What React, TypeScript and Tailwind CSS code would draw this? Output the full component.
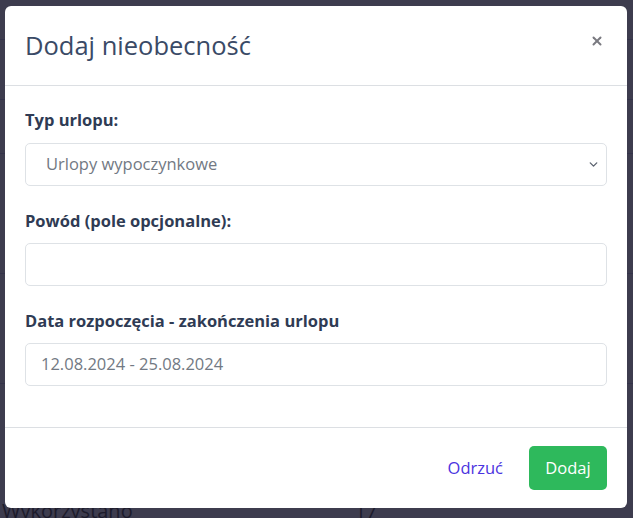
import React from 'react';
import { ChevronDown, X } from 'lucide-react';

const font = { fontFamily: '"Open Sans", "Noto Sans", sans-serif' };

const App: React.FC = () => {
  return (
    <div className="relative h-[518px] w-[633px] overflow-hidden bg-[#3d3c4e]" style={font}>
      {/* page behind the dialog, dimmed */}
      <div className="flex flex-col text-[#1c1b2b]">
        <div className="h-[40px] border-b border-[#34334a]" />
        <div className="h-[60px] border-b border-[#34334a]" />
        <div className="h-[54px] border-b border-[#34334a]" />
        <div className="h-[120px] border-b border-[#34334a]" />
        <div className="h-[110px] border-b border-[#34334a]" />
        <div className="flex h-[138px] items-end gap-[222px] pl-[2px] text-[20px] leading-[22px]">
          <span>Wykorzystano</span>
          <span>17</span>
        </div>
      </div>

      <div className="absolute inset-0 px-[5px] pt-[6px]">
        <div className="flex h-[502px] w-[622px] flex-col rounded-[6px] bg-white">
          <div className="flex h-[80px] items-center justify-between border-b border-[#dcdfe3] pl-5 pr-[23px]">
            <h1 className="text-[25.5px] text-[#3a4a66]">Dodaj nieobecność</h1>
            <X size={14} strokeWidth={3.4} className="mb-[10px] text-[#7a7a80]" />
          </div>

          <div className="flex flex-1 flex-col px-5 pt-[22px]">
            <label className="mb-[11px] h-6 text-[16.5px] font-bold leading-6 text-[#2f3b54]">Typ urlopu:</label>
            <div className="flex h-[43px] items-center justify-between rounded-[5px] border border-[#dee2e6] pl-[20px] pr-[6px]">
              <span className="text-[16.5px] text-[#727983]">Urlopy wypoczynkowe</span>
              <ChevronDown size={13} strokeWidth={2.5} className="text-[#5c6470]" />
            </div>

            <label className="mb-[10px] mt-[23px] h-6 text-[16.5px] font-bold leading-6 text-[#2f3b54]">Powód (pole opcjonalne):</label>
            <input className="h-[43px] rounded-[5px] border border-[#dee2e6] px-4 outline-none" />

            <label className="mb-[10px] mt-[23px] h-6 text-[16.5px] font-bold leading-6 text-[#2f3b54]">Data rozpoczęcia - zakończenia urlopu</label>
            <div className="flex h-[43px] items-center rounded-[5px] border border-[#dee2e6] pl-[15px]">
              <span className="text-[16.5px] text-[#727983]">12.08.2024 - 25.08.2024</span>
            </div>
          </div>

          <div className="flex h-[81px] items-center justify-end gap-[26px] border-t border-[#dcdfe3] pr-5">
            <button className="text-[16.5px] text-[#4b34e0]">Odrzuć</button>
            <button className="h-[44px] w-[78px] rounded-[5px] bg-[#2eb95c] text-[16.5px] text-white">Dodaj</button>
          </div>
        </div>
      </div>
    </div>
  );
};

export default App;
